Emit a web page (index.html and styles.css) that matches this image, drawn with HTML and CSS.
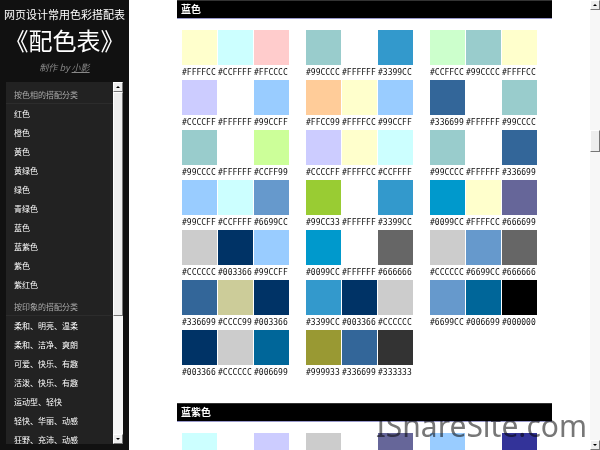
FILE: index.html
```
<!DOCTYPE html>
<html lang="zh-CN">
<head>
<meta charset="utf-8">
<meta name="viewport" content="width=device-width, initial-scale=1">
<title>配色表</title>
<link rel="stylesheet" href="styles.css">
</head>
<body>
<div class="app">
  <aside class="sidebar">
    <header class="brand">
      <p class="tagline">网页设计常用色彩搭配表</p>
      <h1>《配色表》</h1>
      <p class="byline">制作 by <a href="#">小影</a></p>
    </header>
    <div class="menu">
      <nav class="menu-list">
        <h2>按色相的搭配分类</h2>
        <ul>
          <li><a href="#">红色</a></li>
          <li><a href="#">橙色</a></li>
          <li><a href="#">黄色</a></li>
          <li><a href="#">黄绿色</a></li>
          <li><a href="#">绿色</a></li>
          <li><a href="#">青绿色</a></li>
          <li><a href="#blue">蓝色</a></li>
          <li><a href="#violet">蓝紫色</a></li>
          <li><a href="#">紫色</a></li>
          <li><a href="#">紫红色</a></li>
        </ul>
        <h2>按印象的搭配分类</h2>
        <ul>
          <li><a href="#">柔和、明亮、温柔</a></li>
          <li><a href="#">柔和、洁净、爽朗</a></li>
          <li><a href="#">可爱、快乐、有趣</a></li>
          <li><a href="#">活泼、快乐、有趣</a></li>
          <li><a href="#">运动型、轻快</a></li>
          <li><a href="#">轻快、华丽、动感</a></li>
          <li><a href="#">狂野、充沛、动感</a></li>
        </ul>
      </nav>
      <div class="scrollbar menu-scroll" aria-hidden="true">
        <span class="arrow up"></span>
        <span class="thumb"></span>
        <span class="arrow down"></span>
      </div>
    </div>
  </aside>
  <main class="content">
    <section id="blue">
      <h2 class="bar">蓝色</h2>
      <div class="schemes" data-schemes="FFFFCC CCFFFF FFCCCC,99CCCC FFFFFF 3399CC,CCFFCC 99CCCC FFFFCC,CCCCFF FFFFFF 99CCFF,FFCC99 FFFFCC 99CCFF,336699 FFFFFF 99CCCC,99CCCC FFFFFF CCFF99,CCCCFF FFFFCC CCFFFF,99CCCC FFFFFF 336699,99CCFF CCFFFF 6699CC,99CC33 FFFFFF 3399CC,0099CC FFFFCC 666699,CCCCCC 003366 99CCFF,0099CC FFFFFF 666666,CCCCCC 6699CC 666666,336699 CCCC99 003366,3399CC 003366 CCCCCC,6699CC 006699 000000,003366 CCCCCC 006699,999933 336699 333333"></div>
    </section>
    <section id="violet">
      <h2 class="bar">蓝紫色</h2>
      <div class="schemes chips-only" data-schemes="CCFFFF FFFFFF CCCCFF,CCCCCC FFFFFF 666699,99CCFF FFFFFF 333399"></div>
    </section>
  </main>
  <div class="scrollbar page-scroll" aria-hidden="true">
    <span class="arrow up"></span>
    <span class="thumb"></span>
    <span class="arrow down"></span>
  </div>
  <div class="watermark">IShareSite.com</div>
</div>
<script src="schemes.js"></script>
</body>
</html>
```
FILE: schemes.js
```
// Builds each group of three swatches from the section's list of hex values.
document.querySelectorAll(".schemes").forEach(function (box) {
  var labelled = !box.classList.contains("chips-only");
  box.dataset.schemes.split(",").forEach(function (group) {
    var scheme = document.createElement("div");
    scheme.className = "scheme";
    group.split(" ").forEach(function (hex) {
      var item = document.createElement("div");
      var chip = document.createElement("div");
      item.className = "swatch";
      chip.className = "chip";
      chip.style.backgroundColor = "#" + hex;
      item.append(chip);
      if (labelled) {
        var code = document.createElement("span");
        code.className = "code";
        code.textContent = "#" + hex;
        item.append(code);
      }
      scheme.append(item);
    });
    box.append(scheme);
  });
});
```
FILE: styles.css
```
* {
  box-sizing: border-box;
}

body {
  margin: 0;
  background: #fff;
  color: #111;
  font-family: "Open Sans", "Noto Sans CJK SC", sans-serif;
}

h1, h2, p, ul {
  margin: 0;
  padding: 0;
  font-weight: normal;
}

ul {
  list-style: none;
}

.app {
  position: relative;
  display: flex;
  height: 100vh;
  overflow: hidden;
}

/* Sidebar */
.sidebar {
  display: flex;
  flex-direction: column;
  flex: none;
  width: 129px;
  padding: 6px;
  background: #111;
  color: #fff;
  font-family: "Noto Sans CJK SC", sans-serif;
}

.brand {
  height: 76px;
  text-align: center;
  white-space: nowrap;
}

.tagline {
  display: flex;
  justify-content: center;
  font-size: 11px;
  line-height: 16px;
}

.brand h1 {
  display: flex;
  justify-content: center;
  font-size: 24px;
  line-height: 36px;
}

.byline {
  color: #888;
  font-size: 9px;
  font-style: italic;
  line-height: 20px;
}

.byline a {
  color: inherit;
}

.menu {
  display: flex;
  flex: 1;
  min-height: 0;
  background: #222;
}

.menu-list {
  flex: 1;
  overflow: hidden;
  font-size: 8px;
  white-space: nowrap;
}

.menu-list h2 {
  height: 22px;
  padding-left: 8px;
  border-bottom: 1px solid #2c2c2c;
  color: #aaa;
  font-size: 8px;
  line-height: 25px;
}

.menu-list li {
  height: 19px;
  padding-left: 8px;
  line-height: 19px;
}

.menu-list a {
  color: #fff;
  text-decoration: none;
}

/* Scrollbars */
.scrollbar {
  display: flex;
  flex-direction: column;
  flex: none;
  width: 10px;
  background: #f7f7f7;
}

.arrow {
  display: flex;
  align-items: center;
  justify-content: center;
  height: 10px;
  border: 1px solid;
  border-color: #fff #777 #777 #fff;
  background: #eee;
}

.arrow::before {
  content: "";
  border: 2px solid transparent;
}

.up::before {
  border-top: 0;
  border-bottom-color: #000;
}

.down {
  margin-top: auto;
}

.down::before {
  border-bottom: 0;
  border-top-color: #000;
}

.thumb {
  border: 1px solid;
  border-color: #fff #777 #777 #fff;
  background: #eee;
}

.menu-scroll .thumb {
  height: 62%;
}

.page-scroll .thumb {
  height: 22px;
  margin-top: 120px;
}

/* Colour schemes */
.content {
  flex: 1;
  min-width: 0;
  padding: 0 38px 0 48px;
  overflow: hidden;
}

.bar {
  height: 19px;
  padding-left: 4px;
  border-top: 1px solid #333;
  border-bottom: 1px solid #99c;
  background: #000;
  color: #fff;
  font-family: "Noto Sans CJK SC", sans-serif;
  font-size: 10px;
  font-weight: bold;
  line-height: 16px;
}

.schemes {
  display: grid;
  grid-template-columns: repeat(3, max-content);
  column-gap: 17px;
  padding: 11px 0 23px 5px;
}

.scheme {
  display: flex;
  gap: 1px;
}

.swatch {
  width: 35px;
}

.chip {
  height: 35px;
}

.code {
  display: block;
  font-family: "DejaVu Sans Mono", monospace;
  font-size: 8px;
  line-height: 15px;
}

.watermark {
  position: absolute;
  right: 13px;
  bottom: 6px;
  color: #777;
  font-family: "Noto Sans", sans-serif;
  font-size: 30px;
  line-height: 36px;
  mix-blend-mode: multiply;
}
```
